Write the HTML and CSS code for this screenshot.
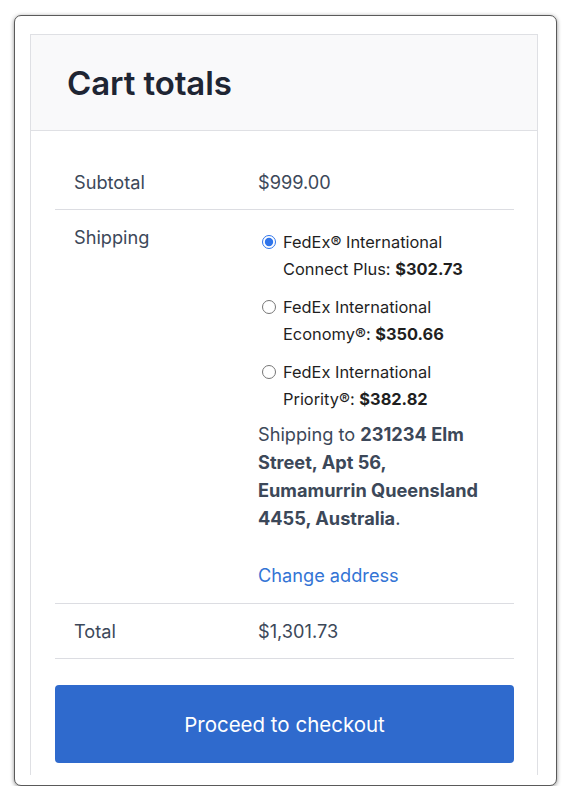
FILE: index.html
```
<!DOCTYPE html>
<html lang="en">
<head>
  <meta charset="UTF-8">
  <title>Cart totals</title>
  <link rel="stylesheet" href="styles.css">
</head>
<body>
  <div class="frame">
    <div class="clip">
      <div class="cart">
        <div class="cart-head">
          <h2>Cart totals</h2>
        </div>
        <div class="totals">
          <div class="row">
            <div class="label">Subtotal</div>
            <div class="value">$999.00</div>
          </div>
          <div class="row shipping">
            <div class="label">Shipping</div>
            <div class="value">
              <ul class="methods">
                <li><input type="radio" name="ship" id="m1" checked><label for="m1">FedEx® International Connect Plus: <b>$302.73</b></label></li>
                <li><input type="radio" name="ship" id="m2"><label for="m2">FedEx International Economy®: <b>$350.66</b></label></li>
                <li><input type="radio" name="ship" id="m3"><label for="m3">FedEx International Priority®: <b>$382.82</b></label></li>
              </ul>
              <p class="dest">Shipping to <b>231234 Elm Street, Apt 56, Eumamurrin Queensland 4455, Australia</b>.</p>
              <a class="change" href="#">Change address</a>
            </div>
          </div>
          <div class="row">
            <div class="label">Total</div>
            <div class="value">$1,301.73</div>
          </div>
        </div>
        <div class="checkout">
          <button>Proceed to checkout</button>
        </div>
      </div>
    </div>
  </div>
</body>
</html>
```

FILE: styles.css
```
body { margin: 0; font-family: Inter, "Noto Sans", sans-serif; background: #fff; }

.frame {
  box-sizing: border-box;
  width: 543px;
  height: 771px;
  margin: 15px 0 0 14px;
  padding: 18px 18px 10px 15px;
  border: 1px solid #5a5a5a;
  border-radius: 7px;
  box-shadow: 0 1px 4px rgba(0,0,0,0.45);
  background: #fff;
}
.clip { height: 100%; overflow: hidden; }

.cart { border: 1px solid #dfe0e4; min-height: 800px; }
.cart-head {
  background: #f9f9fa;
  border-bottom: 1px solid #dfe0e4;
  height: 95px;
  padding-left: 36px;
  display: flex;
  align-items: center;
}
.cart-head h2 {
  margin: 0;
  font-size: 33px;
  font-weight: 600;
  color: #1e2533;
  letter-spacing: -0.1px;
}

.totals { margin: 24px 23px 0 24px; }
.row {
  display: grid;
  grid-template-columns: 203px 1fr;
  border-bottom: 1px solid #dcdde2;
  padding: 16px 0;
  font-size: 18.2px;
  line-height: 22px;
  color: #3c4859;
}
.row.shipping { padding-bottom: 14px; }
.row .label { padding-left: 19px; }
.row .value { padding-right: 18px; }

.methods { list-style: none; margin: 3px 0 0; padding: 0; }
.methods li {
  display: flex;
  align-items: flex-start;
  font-size: 16.4px;
  line-height: 27px;
  color: #1f1f1f;
  margin-bottom: 11px;
}
.methods input {
  width: 14px;
  height: 14px;
  margin: 6px 7px 0 4px;
  flex: none;
  accent-color: #2f74ea;
}
.methods b { font-weight: 700; }

.dest { margin: -4px 0 0; line-height: 28px; }
.dest b { font-weight: 700; }
.change {
  display: block;
  margin-top: 29px;
  color: #3374d5;
  text-decoration: none;
  line-height: 28px;
}

.checkout { padding: 26px 23px 0 24px; }
.checkout button {
  display: block;
  width: 100%;
  height: 78px;
  border: 0;
  border-radius: 4px;
  background: #2f6acd;
  color: #fff;
  font-family: inherit;
  font-size: 20.5px;
}
```
